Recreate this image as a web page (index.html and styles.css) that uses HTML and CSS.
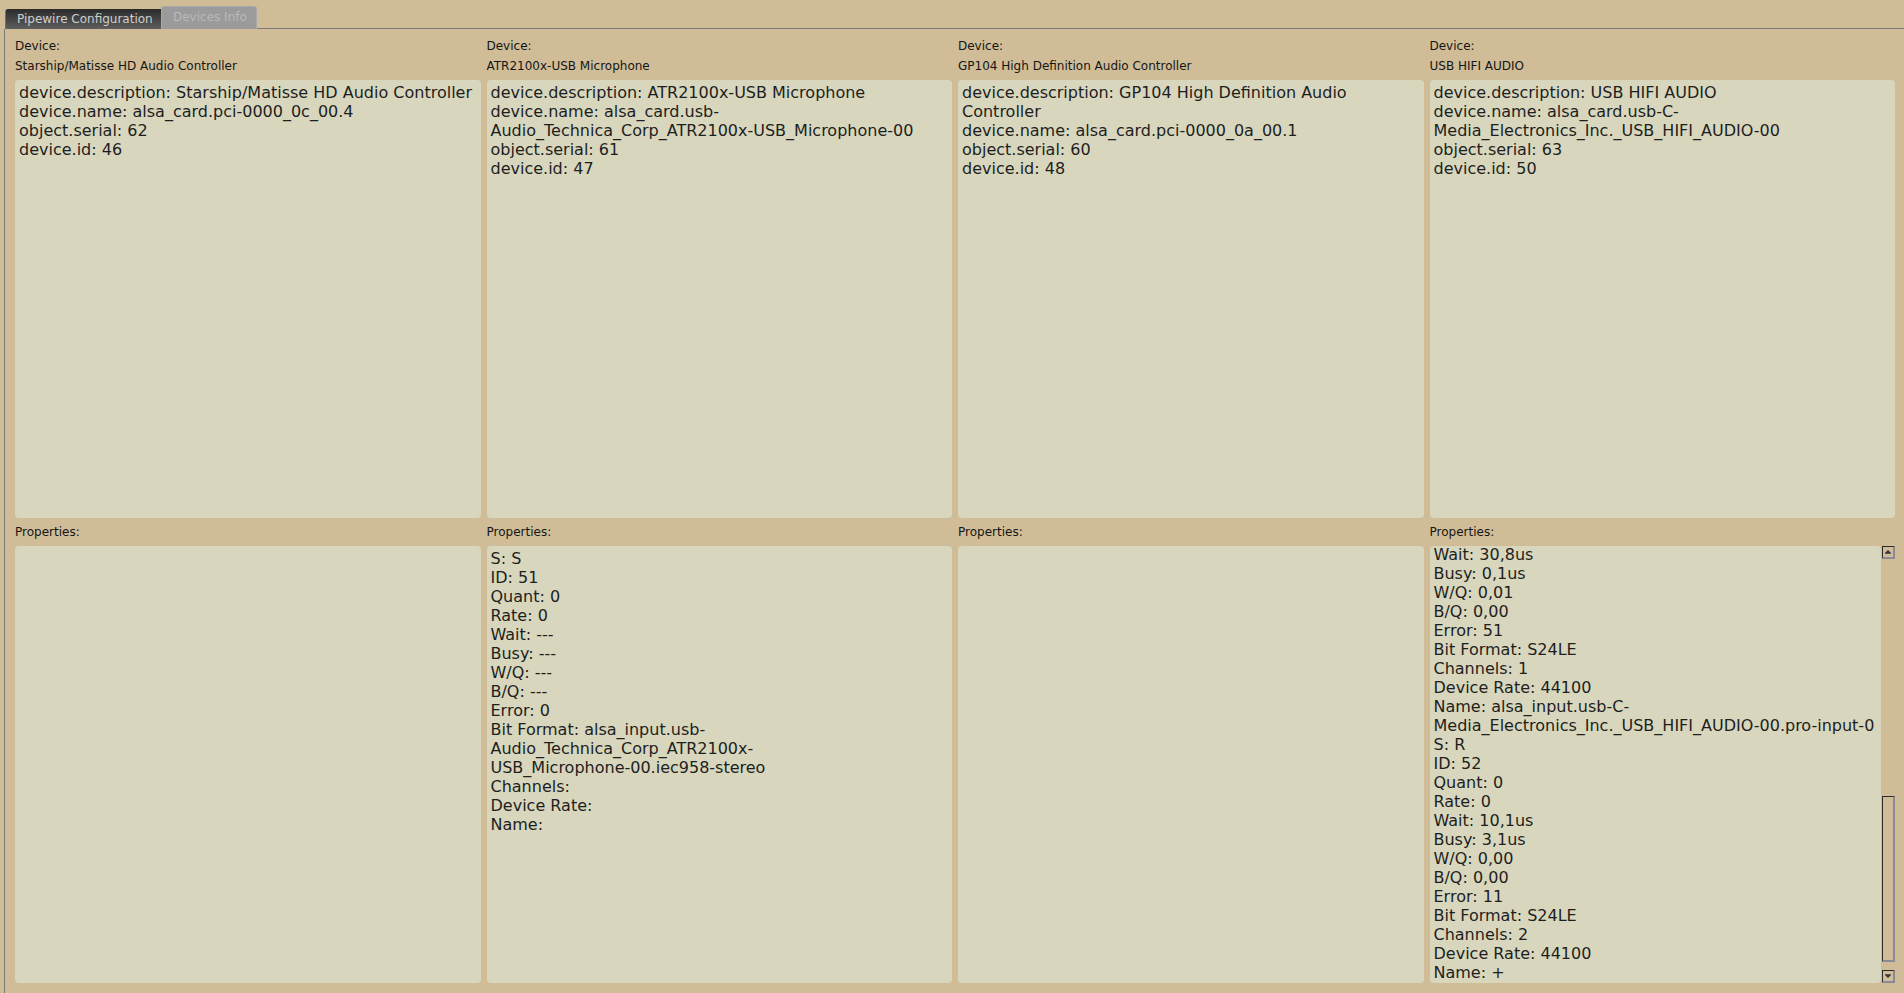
FILE: index.html
```html
<!DOCTYPE html>
<html>
<head>
<meta charset="utf-8">
<title>Devices Info</title>
<link rel="stylesheet" href="styles.css">
</head>
<body>
<div class="tabbar">
  <div class="tab tab-dark">Pipewire Configuration</div>
  <div class="tab tab-active">Devices Info</div>
  <div class="tabline"></div>
</div>
<div class="main">
  <div class="col">
    <div class="label">Device:</div>
    <div class="label">Starship/Matisse HD Audio Controller</div>
    <div class="panel top">device.description: Starship/Matisse HD Audio Controller
device.name: alsa_card.pci-0000_0c_00.4
object.serial: 62
device.id: 46</div>
    <div class="props-label">Properties:</div>
    <div class="panel bottom"></div>
  </div>
  <div class="col">
    <div class="label">Device:</div>
    <div class="label">ATR2100x-USB Microphone</div>
    <div class="panel top">device.description: ATR2100x-USB Microphone
device.name: alsa_card.usb-
Audio_Technica_Corp_ATR2100x-USB_Microphone-00
object.serial: 61
device.id: 47</div>
    <div class="props-label">Properties:</div>
    <div class="panel bottom">S: S
ID: 51
Quant: 0
Rate: 0
Wait: ---
Busy: ---
W/Q: ---
B/Q: ---
Error: 0
Bit Format: alsa_input.usb-
Audio_Technica_Corp_ATR2100x-
USB_Microphone-00.iec958-stereo
Channels:
Device Rate:
Name:</div>
  </div>
  <div class="col">
    <div class="label">Device:</div>
    <div class="label">GP104 High Definition Audio Controller</div>
    <div class="panel top">device.description: GP104 High Definition Audio
Controller
device.name: alsa_card.pci-0000_0a_00.1
object.serial: 60
device.id: 48</div>
    <div class="props-label">Properties:</div>
    <div class="panel bottom"></div>
  </div>
  <div class="col">
    <div class="label">Device:</div>
    <div class="label">USB HIFI AUDIO</div>
    <div class="panel top">device.description: USB HIFI AUDIO
device.name: alsa_card.usb-C-
Media_Electronics_Inc._USB_HIFI_AUDIO-00
object.serial: 63
device.id: 50</div>
    <div class="props-label">Properties:</div>
    <div class="panel-row">
      <div class="panel scrolled"><div class="scroll-inner">Wait: 30,8us
Busy: 0,1us
W/Q: 0,01
B/Q: 0,00
Error: 51
Bit Format: S24LE
Channels: 1
Device Rate: 44100
Name: alsa_input.usb-C-
Media_Electronics_Inc._USB_HIFI_AUDIO-00.pro-input-0
S: R
ID: 52
Quant: 0
Rate: 0
Wait: 10,1us
Busy: 3,1us
W/Q: 0,00
B/Q: 0,00
Error: 11
Bit Format: S24LE
Channels: 2
Device Rate: 44100
Name: +</div></div>
      <div class="scrollbar">
        <div class="sb-btn"><span class="arrow-up"></span></div>
        <div class="sb-spacer"></div>
        <div class="sb-thumb"></div>
        <div class="sb-btn down"><span class="arrow-down"></span></div>
      </div>
    </div>
  </div>
</div>
</body>
</html>
```
FILE: styles.css
```css
html, body {
  margin: 0;
  padding: 0;
}
body {
  background: #d0bd97;
  font-family: "DejaVu Sans", Verdana, sans-serif;
  color: #1c1c1c;
  width: 1904px;
  height: 993px;
  overflow: hidden;
}
.tabbar {
  display: flex;
  align-items: flex-end;
  height: 29px;
  padding-left: 5px;
  box-sizing: border-box;
}
.tab {
  box-sizing: border-box;
  font-size: 12px;
  white-space: nowrap;
}
.tab-dark {
  width: 156px;
  height: 20px;
  line-height: 21px;
  padding-left: 11px;
  background: linear-gradient(#2a2a2a, #5e5e5e);
  color: #cfcfcf;
  border-radius: 3px 0 0 0;
  border-left: 1px solid #6e6e6e;
}
.tab-active {
  width: 96px;
  height: 23px;
  line-height: 21px;
  padding-left: 11px;
  background: #9b9b9b;
  color: #b9b9b9;
  border: 1px solid #a9a9a9;
  border-bottom: none;
  border-radius: 3px 3px 0 0;
}
.tabline {
  flex: 1;
  height: 1px;
  background: #7b7b7b;
  align-self: flex-end;
}
.main {
  display: grid;
  grid-template-columns: repeat(4, 1fr);
  column-gap: 6px;
  margin-left: 4px;
  border-left: 1px solid #7a7a7a;
  padding: 6px 9px 10px 10px;
  height: 964px;
  box-sizing: border-box;
}
.col {
  display: flex;
  flex-direction: column;
  min-height: 0;
  min-width: 0;
}
.label {
  font-size: 12px;
  height: 20px;
  line-height: 22px;
  white-space: nowrap;
  color: #151515;
}
.props-label {
  font-size: 12px;
  height: 28px;
  line-height: 28px;
  color: #151515;
}
.panel {
  flex: 1 1 0;
  min-height: 0;
  background: #d8d7bd;
  border-radius: 4px;
  padding: 3px 4px;
  font-size: 16px;
  line-height: 19px;
  white-space: pre;
  overflow: hidden;
  box-sizing: border-box;
  color: #1e1e1e;
}
.panel.top {
  margin-top: 5px;
}
.panel-row {
  flex: 1 1 6px;
  min-height: 0;
  display: flex;
  gap: 1px;
}
.panel.scrolled {
  padding-top: 0;
}
.scroll-inner {
  margin-top: -1px;
}
.scrollbar {
  width: 13px;
  display: flex;
  flex-direction: column;
}
.sb-btn {
  height: 13px;
  box-sizing: border-box;
  border-top: 1px solid #2a2a2a;
  border-left: 1px solid #2a2a2a;
  border-right: 2px solid #8b8b97;
  border-bottom: 2px solid #8b8b97;
  display: flex;
  align-items: center;
  justify-content: center;
}
.sb-spacer {
  flex: 1;
}
.sb-thumb {
  height: 166px;
  margin-bottom: 8px;
  box-sizing: border-box;
  border-top: 1px solid #2a2a2a;
  border-left: 1px solid #2a2a2a;
  border-right: 2px solid #8b8b97;
  border-bottom: 2px solid #8b8b97;
}
.arrow-up {
  width: 0;
  height: 0;
  border-left: 3px solid transparent;
  border-right: 3px solid transparent;
  border-bottom: 3px solid #333;
  box-shadow: 0 1px 0 #555;
}
.arrow-down {
  width: 0;
  height: 0;
  border-left: 3px solid transparent;
  border-right: 3px solid transparent;
  border-top: 3px solid #333;
  box-shadow: 0 -1px 0 #555;
}
```
